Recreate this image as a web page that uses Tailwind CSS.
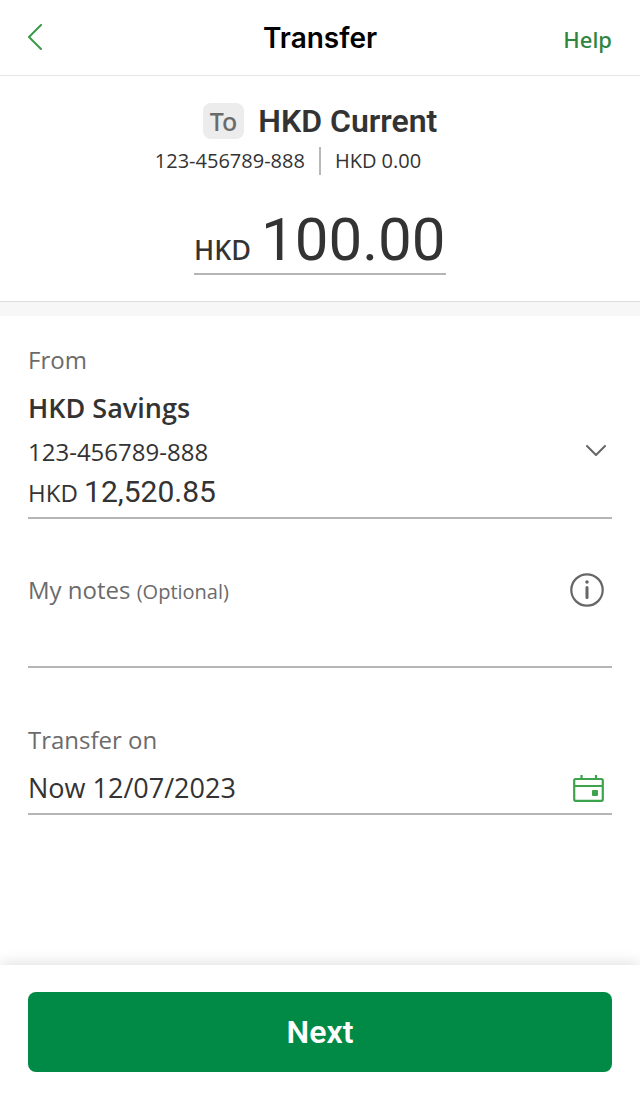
<!DOCTYPE html>
<html lang="en">
<head>
<meta charset="utf-8">
<meta name="viewport" content="width=device-width, initial-scale=1">
<title>Transfer</title>
<script src="https://cdn.jsdelivr.net/npm/@tailwindcss/browser@4"></script>
</head>
<body class="flex min-h-screen flex-col bg-white font-['Open_Sans','Noto_Sans',sans-serif] text-[#333333]">
  <header class="grid h-19 grid-cols-3 items-center border-b border-[#e5e5e5] px-7">
    <button type="button" aria-label="Back" class="justify-self-start">
      <svg class="h-7 w-4" viewBox="0 0 16 28" fill="none" stroke="#3a9a4b" stroke-width="2" stroke-linecap="round" stroke-linejoin="round"><path d="M13 1 1 13l12 12"/></svg>
    </button>
    <h1 class="text-center font-[Inter,sans-serif] text-[28px] leading-9 font-semibold text-black">Transfer</h1>
    <a href="#" class="justify-self-end pt-0.5 font-['Noto_Sans',sans-serif] text-[22px] leading-8 font-medium text-[#2e8540]">Help</a>
  </header>

  <main class="flex-1">
    <section class="flex flex-col items-center border-b border-[#dedede] pt-[27px] pb-[26px]">
      <div class="flex items-center gap-3.5">
        <span class="rounded-lg bg-[#ececec] px-[7px] font-['Noto_Sans',sans-serif] text-[25px] leading-9 font-medium text-[#6b6b6b]">To</span>
        <h2 class="font-[Roboto,sans-serif] text-[32px] leading-9 font-semibold">HKD Current</h2>
      </div>
      <div class="mt-1.5 mr-16 flex h-8 items-center text-xl">
        <span class="pr-3.5">123-456789-888</span>
        <span class="border-l-2 border-[#b8b8b8] pl-3.5">HKD 0.00</span>
      </div>
      <div class="mt-[30px] flex items-baseline gap-2.5 border-b-2 border-[#b5b5b5]">
        <label for="amount" class="font-['Noto_Sans',sans-serif] text-[27px] font-medium">HKD</label>
        <input id="amount" type="text" inputmode="decimal" value="100.00" class="h-[66px] w-[185px] font-[Roboto,sans-serif] text-[60px] outline-none">
      </div>
    </section>
    <div class="h-3.5 bg-[#f7f7f7]"></div>

    <form id="transfer" class="px-7">
      <section class="border-b-2 border-[#b5b5b5] pt-7 pb-1">
        <h3 id="from" class="text-2xl leading-8 text-[#6b6b6b]">From</h3>
        <button type="button" aria-labelledby="from account" class="mt-3.5 flex w-full items-center justify-between pr-1.5 text-left">
          <span id="account" class="flex flex-col">
            <span class="text-[27px] leading-9 font-semibold">HKD Savings</span>
            <span class="mt-2.5 text-2xl leading-8">123-456789-888</span>
            <span class="mt-1 text-2xl leading-10">HKD <span class="font-[Roboto,sans-serif] text-[30px]">12,520.85</span></span>
          </span>
          <svg class="h-4 w-5" viewBox="0 0 20 16" fill="none" stroke="#666" stroke-width="2" stroke-linecap="round" stroke-linejoin="round"><path d="m1 2 9 9 9-9"/></svg>
        </button>
      </section>

      <section class="border-b-2 border-[#b5b5b5] pt-[53px]">
        <div class="flex items-center justify-between pr-2">
          <label for="notes" class="text-2xl leading-9 text-[#6b6b6b]">My notes <span class="text-xl">(Optional)</span></label>
          <button type="button" aria-label="About my notes">
            <svg class="size-[34px]" viewBox="0 0 34 34" fill="none" stroke="#666"><circle cx="17" cy="17" r="15.7" stroke-width="2.2"/><path d="M17 14.500v10" stroke-width="3" stroke-linecap="round"/><circle cx="17" cy="9" r="1.8" fill="#666" stroke="none"/></svg>
          </button>
        </div>
        <input id="notes" type="text" class="mt-2.5 h-12 w-full text-[27px] outline-none">
      </section>

      <section class="border-b-2 border-[#b5b5b5] pt-14 pb-[5px]">
        <label for="date" class="block text-2xl leading-8 text-[#6b6b6b]">Transfer on</label>
        <div class="mt-3 flex items-center justify-between pr-2">
          <input id="date" type="text" value="Now 12/07/2023" class="h-10 min-w-0 flex-1 text-[27px] outline-none">
          <button type="button" aria-label="Choose date">
            <svg class="h-7 w-8" viewBox="0 0 32 28" fill="none" stroke="#3da34d" stroke-width="2.2"><rect x="2.200" y="5" width="28.600" height="21.800" rx="1.5"/><path d="M2 12h28M9.500 1v4M24 1v4"/><rect x="20" y="16" width="6" height="6" rx="1" fill="#3da34d" stroke="none"/></svg>
          </button>
        </div>
      </section>
    </form>
  </main>

  <footer class="bg-white px-7 pt-[27px] pb-7 shadow-[0_-2px_14px_rgba(0,0,0,0.12)]">
    <button type="submit" form="transfer" class="h-20 w-full rounded-lg bg-[#008a45] font-[Roboto,sans-serif] text-[32px] font-semibold text-white">Next</button>
  </footer>
</body>
</html>
